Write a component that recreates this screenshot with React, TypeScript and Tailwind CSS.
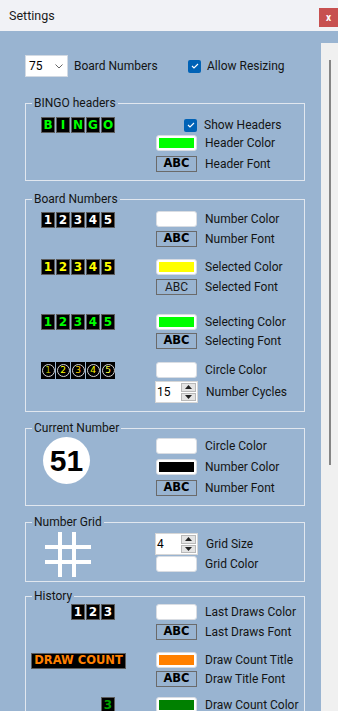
import React from "react";

const txt = "text-[12px] leading-[16px] text-[#141414]";

function Tile({ ch, color }: { ch: string; color: string }) {
  return (
    <div
      className={`w-[14px] h-[16px] bg-black border border-[#5c5c5c] flex items-center justify-center text-[12px] font-bold leading-none font-['DejaVu_Sans',sans-serif] ${color}`}
    >
      {ch}
    </div>
  );
}

function Ring({ ch, color }: { ch: string; color: string }) {
  return (
    <div className="w-[14px] h-[17px] bg-black flex items-center justify-center">
      <div
        className={`w-[13px] h-[13px] rounded-full border-[1.5px] border-[#d4d4d4] flex items-center justify-center text-[9px] leading-none font-['DejaVu_Sans',sans-serif] ${color}`}
      >
        {ch}
      </div>
    </div>
  );
}

function Swatch({ fill }: { fill: string }) {
  return (
    <div className="w-[41px] h-[16px] rounded-[3px] bg-white border border-[#d9dde3] p-[2px]">
      <div className={`w-full h-full ${fill}`} />
    </div>
  );
}

function FontBox({ bold = true }: { bold?: boolean }) {
  return (
    <div className="w-[41px] h-[16px] border border-[#6a6a6a] flex items-center justify-center">
      {bold ? (
        <span className="text-[11.5px] font-bold leading-none font-['DejaVu_Sans',sans-serif] text-black">ABC</span>
      ) : (
        <span className="text-[12px] leading-none text-[#1a1a1a]">ABC</span>
      )}
    </div>
  );
}

function Spinner({ value }: { value: string }) {
  return (
    <div className="w-[43px] h-[22px] bg-white border border-[#d6d6d6] flex">
      <span className="flex-1 pl-[1px] text-[12px] leading-[20px] text-black">{value}</span>
      <div className="w-[15px] flex flex-col my-[1px] mr-[1px] gap-[1px]">
        <div className="flex-1 bg-[#e4e4e4] border border-[#b9b9b9] flex items-center justify-center">
          <svg className="block" width="7" height="4" viewBox="0 0 7 4">
            <path d="M0 4 L3.5 0 L7 4Z" fill="#222" />
          </svg>
        </div>
        <div className="flex-1 bg-[#e4e4e4] border border-[#b9b9b9] flex items-center justify-center">
          <svg className="block" width="7" height="4" viewBox="0 0 7 4">
            <path d="M0 0 L3.5 4 L7 0Z" fill="#222" />
          </svg>
        </div>
      </div>
    </div>
  );
}

function Check() {
  return (
    <div className="w-[13px] h-[13px] rounded-[2px] bg-[#0062b6] flex items-center justify-center shrink-0">
      <svg className="block" width="8" height="6" viewBox="0 0 8 6">
        <path d="M1 3 L3 5 L7 1" stroke="white" strokeWidth="1.1" fill="none" />
      </svg>
    </div>
  );
}

function Item({ control, label, className = "" }: { control: React.ReactNode; label: string; className?: string }) {
  return (
    <div className={`flex items-center gap-[8px] ${className}`}>
      {control}
      <span className={txt}>{label}</span>
    </div>
  );
}

function Group({ title, className = "", children }: { title: string; className?: string; children: React.ReactNode }) {
  return (
    <fieldset className={`w-[280px] border border-[#e1e7ef] p-0 m-0 ${className}`}>
      <legend className={`ml-[6px] px-[2px] ${txt} leading-[15px]`}>{title}</legend>
      {children}
    </fieldset>
  );
}

export default function App() {
  return (
    <div className="w-[338px] h-[711px] overflow-hidden bg-[#99b4d1] flex flex-col font-['Roboto',sans-serif]">
      <div className="h-[31px] bg-[#f1f2f6] flex items-start shrink-0">
        <span className="ml-[9px] mt-[8px] text-[12.5px] leading-[16px] text-[#1a1a1a]">Settings</span>
        <div className="ml-auto mt-[8px] w-[19px] h-[19px] bg-[#c75050] flex items-center justify-center text-white text-[10px] font-bold leading-none">
          x
        </div>
      </div>

      <div className="flex flex-1 min-h-0">
        <div className="flex-1 pl-[25px] pt-[24px]">
          <div className="flex items-center h-[22px]">
            <div className="w-[163px] flex items-center">
              <div className="w-[43px] h-[22px] bg-white border border-[#d3dae3] flex items-center pl-[3px] pr-[4px]">
                <span className="text-[12px] leading-none text-black">75</span>
                <svg className="ml-auto block" width="8" height="5" viewBox="0 0 8 5">
                  <path d="M0.5 0.5 L4 4 L7.5 0.5" stroke="#666" fill="none" />
                </svg>
              </div>
              <span className={`ml-[6px] ${txt}`}>Board Numbers</span>
            </div>
            <Check />
            <span className={`ml-[6px] ${txt}`}>Allow Resizing</span>
          </div>

          <Group title="BINGO headers" className="mt-[18px]">
            <div className="flex pl-[15px] pt-[4px] pb-[8px]">
              <div className="w-[115px] pt-[2px] flex gap-[1px] items-start">
                {"BINGO".split("").map((c) => (
                  <Tile key={c} ch={c} color="text-[#00ff00]" />
                ))}
              </div>
              <div className="flex flex-col">
                <div className="h-[20px] flex items-center pl-[28px] gap-[7px]">
                  <Check />
                  <span className={txt}>Show Headers</span>
                </div>
                <Item control={<Swatch fill="bg-[#00ff00]" />} label="Header Color" />
                <Item className="mt-[5px]" control={<FontBox />} label="Header Font" />
              </div>
            </div>
          </Group>

          <Group title="Board Numbers" className="mt-[10px]">
            <div className="flex flex-col pl-[15px] pt-[4px] pb-[8px]">
              <div className="flex">
                <div className="w-[115px] pt-[1px] flex gap-[1px] items-start">
                  {["1", "2", "3", "4", "5"].map((c) => (
                    <Tile key={c} ch={c} color="text-white" />
                  ))}
                </div>
                <div className="flex flex-col gap-[4px]">
                  <Item control={<Swatch fill="bg-white" />} label="Number Color" />
                  <Item control={<FontBox />} label="Number Font" />
                </div>
              </div>
              <div className="flex mt-[12px]">
                <div className="w-[115px] flex gap-[1px] items-start">
                  {["1", "2", "3", "4", "5"].map((c) => (
                    <Tile key={c} ch={c} color="text-[#ffff00]" />
                  ))}
                </div>
                <div className="flex flex-col gap-[4px]">
                  <Item control={<Swatch fill="bg-[#ffff00]" />} label="Selected Color" />
                  <Item control={<FontBox bold={false} />} label="Selected Font" />
                </div>
              </div>
              <div className="flex mt-[19px]">
                <div className="w-[115px] flex gap-[1px] items-start">
                  {["1", "2", "3", "4", "5"].map((c) => (
                    <Tile key={c} ch={c} color="text-[#00ff00]" />
                  ))}
                </div>
                <div className="flex flex-col gap-[3px]">
                  <Item control={<Swatch fill="bg-[#00ff00]" />} label="Selecting Color" />
                  <Item control={<FontBox />} label="Selecting Font" />
                </div>
              </div>
              <div className="flex mt-[13px]">
                <div className="w-[115px] flex gap-[1px] items-start">
                  <Ring ch="1" color="text-[#b4b400]" />
                  <Ring ch="2" color="text-[#ffff00]" />
                  <Ring ch="3" color="text-[#ffd000]" />
                  <Ring ch="4" color="text-[#ffff00]" />
                  <Ring ch="5" color="text-[#ffff40]" />
                </div>
                <div className="flex flex-col gap-[3px]">
                  <Item control={<Swatch fill="bg-white" />} label="Circle Color" />
                  <Item className="-ml-[1px]" control={<Spinner value="15" />} label="Number Cycles" />
                </div>
              </div>
            </div>
          </Group>

          <Group title="Current Number" className="mt-[8px]">
            <div className="flex pl-[15px] pt-[1px] pb-[9px]">
              <div className="w-[115px] pl-[2px]">
                <div className="w-[47px] h-[47px] rounded-full bg-white flex items-center justify-center">
                  <span className="text-[30px] font-bold leading-none text-black font-['Liberation_Sans',sans-serif]">51</span>
                </div>
              </div>
              <div className="flex flex-col gap-[5px] mt-[1px]">
                <Item control={<Swatch fill="bg-white" />} label="Circle Color" />
                <Item control={<Swatch fill="bg-black" />} label="Number Color" />
                <Item control={<FontBox />} label="Number Font" />
              </div>
            </div>
          </Group>

          <Group title="Number Grid" className="mt-[8px]">
            <div className="flex pl-[15px] pt-[3px] pb-[4px]">
              <div className="w-[115px] pl-[4px] -mt-[1px]">
                <svg className="block" width="46" height="45" viewBox="0 0 46 45">
                  <rect x="13" y="0" width="4" height="45" fill="white" />
                  <rect x="27" y="0" width="4" height="45" fill="white" />
                  <rect x="0" y="13" width="46" height="4" fill="white" />
                  <rect x="0" y="28" width="46" height="4" fill="white" />
                </svg>
              </div>
              <div className="flex flex-col gap-[1px]">
                <Item className="-ml-[1px]" control={<Spinner value="4" />} label="Grid Size" />
                <Item control={<Swatch fill="bg-white" />} label="Grid Color" />
              </div>
            </div>
          </Group>

          <Group title="History" className="mt-[6px]">
            <div className="flex flex-col pl-[15px] pb-[8px]">
              <div className="flex">
                <div className="w-[115px] pr-[41px] flex gap-[1px] justify-end items-start">
                  {["1", "2", "3"].map((c) => (
                    <Tile key={c} ch={c} color="text-white" />
                  ))}
                </div>
                <div className="flex flex-col gap-[4px]">
                  <Item control={<Swatch fill="bg-white" />} label="Last Draws Color" />
                  <Item control={<FontBox />} label="Last Draws Font" />
                </div>
              </div>
              <div className="flex mt-[12px]">
                <div className="w-[115px] items-start">
                  <div className="-ml-[10px] mt-[1px] w-[95px] h-[16px] bg-black border border-[#5c5c5c] flex items-center justify-center text-[11.5px] font-bold leading-none text-[#ff8000] font-['DejaVu_Sans',sans-serif]">
                    DRAW COUNT
                  </div>
                </div>
                <div className="flex flex-col gap-[3px]">
                  <Item control={<Swatch fill="bg-[#ff8000]" />} label="Draw Count Title" />
                  <Item control={<FontBox />} label="Draw Title Font" />
                </div>
              </div>
              <div className="flex mt-[10px]">
                <div className="w-[115px] pr-[41px] flex justify-end items-start">
                  <Tile ch="3" color="text-[#00a000]" />
                </div>
                <Item control={<Swatch fill="bg-[#008000]" />} label="Draw Count Color" />
              </div>
            </div>
          </Group>
        </div>

        <div className="w-[17px] mt-[12px] bg-[#f0f0f0] shrink-0">
          <div className="ml-[8px] mt-[17px] w-[2px] h-[405px] bg-[#858585]" />
        </div>
      </div>
    </div>
  );
}
